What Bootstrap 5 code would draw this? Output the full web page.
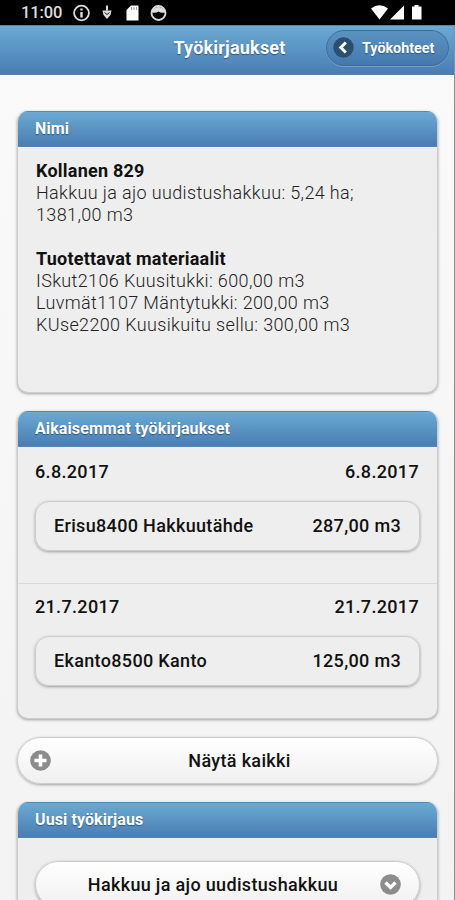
<!DOCTYPE html>
<html lang="fi">
<head>
<meta charset="utf-8">
<meta name="viewport" content="width=device-width, initial-scale=1">
<title>Työkirjaukset</title>
<link href="https://cdn.jsdelivr.net/npm/bootstrap@5.3.0/dist/css/bootstrap.min.css" rel="stylesheet">
<style>
html,body{height:900px;overflow:hidden}
body{font-family:Roboto,"Liberation Sans",sans-serif;font-size:18px;line-height:22px;color:#111;background:linear-gradient(#fafafa,#f3f3f3)}
.screen{height:900px;overflow:hidden}
.screen-edge{left:454px;top:25px;width:1px;height:875px;background:#8c8c8c}
.status-bar{height:25px;background:#000;color:#ddd;font-size:16.5px;padding:0 32px 0 21px}
.status-icons{margin-left:10px}
.clock{width:41px;letter-spacing:-.1px;font-weight:500}
.blue{background:linear-gradient(#6aaad3,#4a7db3);color:#fff;text-shadow:0 1px 1px #2c5a86;font-weight:700}
.top-bar{height:50px;border-top:1px solid #4f86ad;border-bottom:1px solid #5c7fae}
.top-title{grid-area:1/1;font-size:18px;letter-spacing:.2px;text-align:center;padding:0 0 4px 4px}
.back-btn{grid-area:1/1;justify-self:end;width:123px;height:36px;margin:-5px 6px 0 0;border:1px solid #3d6d9d;border-radius:18px;background:linear-gradient(#5a93c2,#4579ae);box-shadow:0 1px 0 rgba(255,255,255,.22);font-size:14.3px;padding-left:6px;gap:8px}
.content{padding-top:36px}
.panel{margin:0 17px 18px 17px;border:1px solid #ccc;border-top:0;border-radius:11px;background:#eee;box-shadow:0 1px 3px rgba(0,0,0,.35);overflow:hidden}
.panel-title{height:36px;padding:0 18px;font-size:16px;letter-spacing:.1px;border-top:1px solid #4f8bb5;border-bottom:1px solid #5585b4;margin:0 -1px}
.summary{height:245px;padding:13px 18px;color:#222;font-weight:300;letter-spacing:.36px}
.summary b{font-weight:700;color:#111;letter-spacing:.22px}
.entry{padding:14px 18px 0 17px;font-weight:500;height:136px;letter-spacing:.33px}
.entry + .entry{border-top:1px solid #d8d8d8;height:135px;padding-top:12px}
.entry-box{height:50px;margin:18px -1px 0 0;padding:0 18px;border:1px solid #ccc;border-radius:14px;box-shadow:0 1px 3px rgba(0,0,0,.35)}
.pill{height:47px;border:1px solid #ccc;border-radius:24px;background:linear-gradient(#fff,#f0f0f0);box-shadow:0 1px 3px rgba(0,0,0,.35);font-weight:500;letter-spacing:.33px;color:#111}
.pill-all{margin:0 17px 18px 17px;padding:0 9px 0 12px}
.pill-select{margin:23px 17px 0;padding:0 18px 0 10px}
</style>
<script src="https://cdn.jsdelivr.net/npm/bootstrap@5.3.0/dist/js/bootstrap.bundle.min.js"></script>
</head>
<body>
<div class="screen position-relative">
<div class="status-bar d-flex align-items-center">
<span class="clock">11:00</span>
<svg width="100" height="20" viewBox="72 2 100 20" class="status-icons me-auto" fill="none" stroke="#ddd">
<circle cx="81.500" cy="12" r="7.400" stroke-width="1.800"/><path d="M81.500 7.500v2M81.500 11v5.500" stroke-width="2.400"/>
<path d="M107 4.500v5" stroke-width="2"/><path d="M102.500 9.500h9l-1 4.500-3.500 4-3.500-4z" fill="#ddd" stroke="none"/><path d="M104.500 11.500l2.500 2 2.500-2" stroke="#222" stroke-width="1"/>
<path d="M131 4.500h7.500v15h-12V9z" fill="#fff" stroke="none"/><path d="M131.500 6v3M134 6v3M136.500 6v3" stroke="#888" stroke-width=".8"/>
<circle cx="158.500" cy="12" r="7" stroke-width="1.800"/><path d="M152 9.500q3-3.500 6.500-3.500t6.500 3.500v2q-4 1-6.500-1-2.500 2-6.500 1z" fill="#ddd" stroke="none"/>
</svg>
<svg width="52" height="20" viewBox="371 2 52 20" fill="#fff"><path d="M371 7.500q8.500-6.500 17 0L379.500 18.500zM404 4.500v14h-14zM414.500 4h4v1.500h3v13h-9.500v-13h2.500z"/></svg>
</div>
<header class="top-bar blue d-grid align-items-center">
<div class="top-title">Työkirjaukset</div>
<div class="back-btn d-flex align-items-center"><svg width="21" height="21" viewBox="0 0 21 21"><circle cx="10.500" cy="10.500" r="10.200" fill="#2b506f"/><path d="M12.800 5.500l-5 5 5 5" fill="none" stroke="#fff" stroke-width="3"/></svg><span>Työkohteet</span></div>
</header>
<main class="content">
<section class="panel">
<div class="panel-title blue d-flex align-items-center">Nimi</div>
<div class="summary"><b>Kollanen 829</b><br>Hakkuu ja ajo uudistushakkuu: 5,24 ha;<br>1381,00 m3<br><br><b>Tuotettavat materiaalit</b><br>ISkut2106 Kuusitukki: 600,00 m3<br>Luvmät1107 Mäntytukki: 200,00 m3<br>KUse2200 Kuusikuitu sellu: 300,00 m3</div>
</section>
<section class="panel">
<div class="panel-title blue d-flex align-items-center">Aikaisemmat työkirjaukset</div>
<div class="entry"><div class="d-flex justify-content-between"><span>6.8.2017</span><span>6.8.2017</span></div><div class="entry-box d-flex justify-content-between align-items-center"><span>Erisu8400 Hakkuutähde</span><span>287,00 m3</span></div></div>
<div class="entry"><div class="d-flex justify-content-between"><span>21.7.2017</span><span>21.7.2017</span></div><div class="entry-box d-flex justify-content-between align-items-center"><span>Ekanto8500 Kanto</span><span>125,00 m3</span></div></div>
</section>
<div class="pill pill-all d-flex align-items-center"><svg width="21" height="21" viewBox="0 0 21 21"><circle cx="10.500" cy="10.500" r="10.300" fill="#8c8c8c"/><path d="M10.500 4.500v12M4.500 10.500h12" stroke="#fff" stroke-width="3.600"/></svg><span class="flex-fill text-center">Näytä kaikki</span></div>
<section class="panel">
<div class="panel-title blue d-flex align-items-center">Uusi työkirjaus</div>
<div class="pill pill-select d-flex align-items-center"><span class="flex-fill text-center">Hakkuu ja ajo uudistushakkuu</span><svg width="21" height="21" viewBox="0 0 21 21"><circle cx="10.500" cy="10.500" r="10.300" fill="#8c8c8c"/><path d="M5.500 8.500l5 5 5-5" fill="none" stroke="#fff" stroke-width="3.300"/></svg></div>
</section>
</main>
<div class="screen-edge position-absolute"></div>
</div>
</body>
</html>
